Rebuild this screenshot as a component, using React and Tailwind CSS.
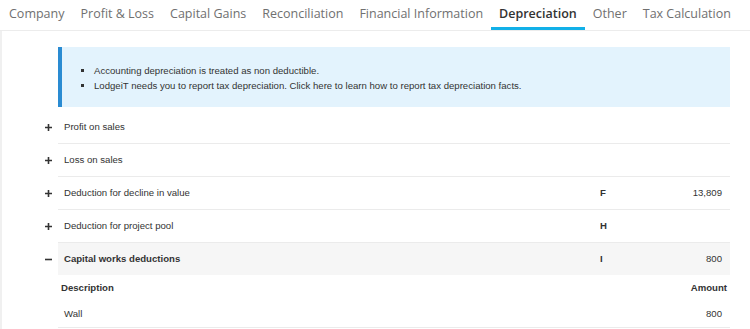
import React from "react";

const tabs = ["Company", "Profit & Loss", "Capital Gains", "Reconciliation", "Financial Information", "Depreciation", "Other", "Tax Calculation"];

function Plus() {
  return (
    <svg width="7" height="7" viewBox="0 0 7 7" className="block">
      <path d="M0 3.5H7M3.5 0V7" stroke="#333" strokeWidth="1.6" />
    </svg>
  );
}
function Minus() {
  return (
    <svg width="7" height="7" viewBox="0 0 7 7" className="block">
      <path d="M0 3.5H7" stroke="#333" strokeWidth="1.6" />
    </svg>
  );
}

function Row({ label, code, value, open }) {
  return (
    <div className="flex">
      <div className="w-[22px] flex items-center pl-[9px]">{open ? <Minus /> : <Plus />}</div>
      <div className={`flex-1 flex items-center pl-[6px] pr-[8px] pt-[1px] ${open ? "h-[32px] bg-[#f6f6f6] font-bold" : "h-[33px] border-b border-[#ebebeb]"}`}>
        <div className="flex-1">{label}</div>
        <div className="w-[72px] font-bold">{code}</div>
        <div className="w-[50px] text-right">{value}</div>
      </div>
    </div>
  );
}

export default function App() {
  return (
    <div className="w-[750px] h-[329px] overflow-hidden bg-white text-[#333]" style={{ fontFamily: "Arial, 'Liberation Sans', sans-serif" }}>
      <div className="flex h-[31px] border-b border-[#ececec] pl-[1px]" style={{ fontFamily: "'Open Sans', sans-serif" }}>
        {tabs.map((t) => (
          <div
            key={t}
            className={`px-2 h-[30px] flex items-start pt-[5px] text-[12.5px] whitespace-nowrap ${
              t === "Depreciation" ? "font-semibold text-[#333] border-b-[3px] border-[#12b0e8]" : "text-[#707070]"
            }`}
          >
            {t}
          </div>
        ))}
      </div>
      <div className="border-l-2 border-[#f0f0f0] h-[298px] pl-[34px] pr-[20px] pt-[16px] text-[9.6px]">
        <div className="ml-[22px] h-[60px] bg-[#e3f3fd] border-l-4 border-[#2a8bd2] pl-[20px] pt-[16px]">
          <ul className="list-[square] pl-[12px] leading-[15px]">
            <li>Accounting depreciation is treated as non deductible.</li>
            <li>LodgeiT needs you to report tax depreciation. Click here to learn how to report tax depreciation facts.</li>
          </ul>
        </div>
        <div className="mt-[4px]">
          <Row label="Profit on sales" />
          <Row label="Loss on sales" />
          <Row label="Deduction for decline in value" code="F" value="13,809" />
          <Row label="Deduction for project pool" code="H" />
          <Row label="Capital works deductions" code="I" value={<span className="font-normal">800</span>} open />
          <div className="ml-[22px] border-b border-[#ebebeb]">
            <div className="flex h-[26px] items-center pl-[3px] pr-[3px] pt-[1px] font-bold">
              <div className="flex-1">Description</div>
              <div>Amount</div>
            </div>
            <div className="flex h-[26px] items-center pl-[6px] pr-[8px]">
              <div className="flex-1">Wall</div>
              <div>800</div>
            </div>
          </div>
        </div>
      </div>
    </div>
  );
}
